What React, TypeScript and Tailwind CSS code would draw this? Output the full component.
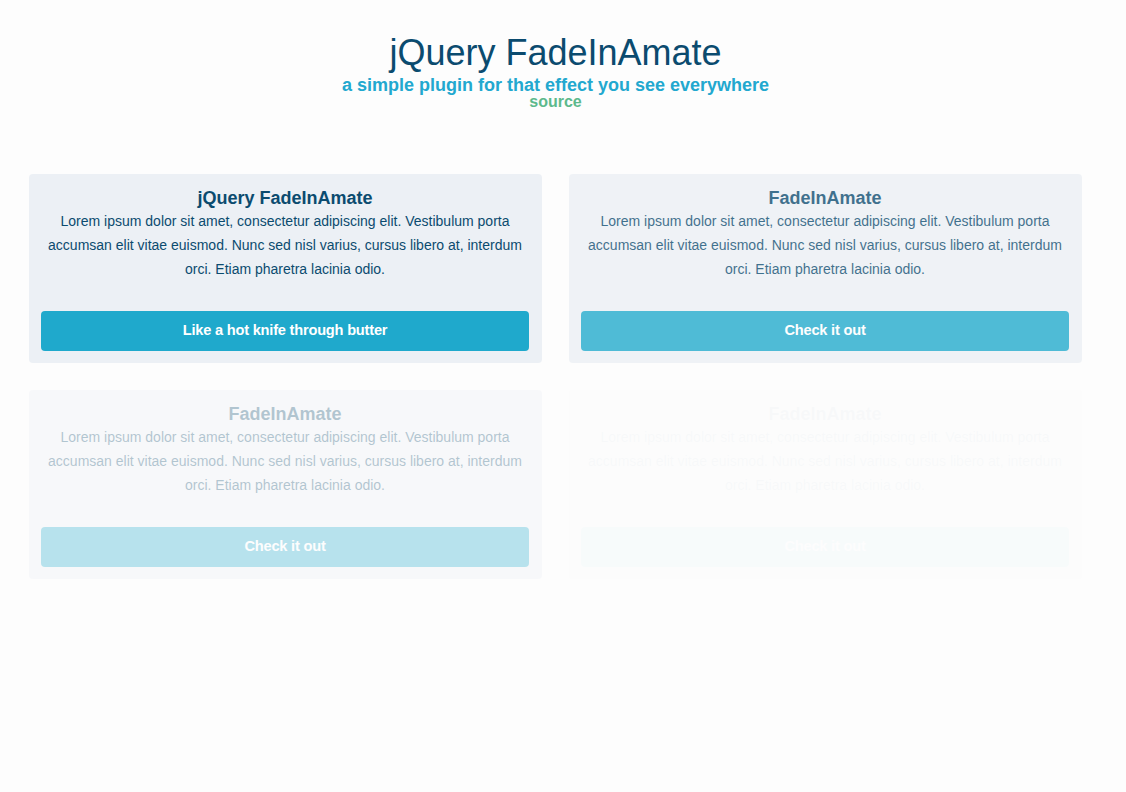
const lorem =
    "Lorem ipsum dolor sit amet, consectetur adipiscing elit. Vestibulum porta accumsan elit vitae euismod. Nunc sed nisl varius, cursus libero at, interdum orci. Etiam pharetra lacinia odio.";

const cards = [
    { title: "jQuery FadeInAmate", button: "Like a hot knife through butter", fade: "opacity-100" },
    { title: "FadeInAmate", button: "Check it out", fade: "opacity-[0.78]" },
    { title: "FadeInAmate", button: "Check it out", fade: "opacity-[0.31]" },
    { title: "FadeInAmate", button: "Check it out", fade: "opacity-[0.02]" }
];

function Card({ title, button, fade }: { title: string; button: string; fade: string }) {
    return (
        <div className={`flex flex-col rounded bg-[#ecf0f5] pl-3 pr-[13px] pt-[13px] pb-3 text-center ${fade}`}>
            <h2 className="text-[18px] font-bold leading-[22px] text-[#0b4b6f]">{title}</h2>
            <p className="text-[14px] leading-6 text-[#0b4b6f] mb-[30px]">{lorem}</p>
            <button className="h-10 w-full rounded bg-[#1fa9cc] text-[14.6px] font-bold tracking-[-0.2px] text-white">
                {button}
            </button>
        </div>
    );
}

export default function App() {
    return (
        <div className="min-h-[792px] w-full bg-[#fdfdfd] font-['Liberation_Sans',Arial,sans-serif]">
            <div className="w-[1111px] px-[29px]">
                <header className="flex flex-col items-center pt-[30px]">
                    <h1 className="text-[36px] leading-[46px] text-[#0b4b6f]">jQuery FadeInAmate</h1>
                    <p className="text-[18px] font-bold leading-[18px] text-[#22a8cf]">
                        a simple plugin for that effect you see everywhere
                    </p>
                    <a className="text-[16px] font-bold leading-[16px] text-[#5cb98c]">source</a>
                </header>
                <div className="mt-[64px] grid grid-cols-2 gap-[27px]">
                    {cards.map((c, i) => (
                        <Card key={i} {...c} />
                    ))}
                </div>
            </div>
        </div>
    );
}
